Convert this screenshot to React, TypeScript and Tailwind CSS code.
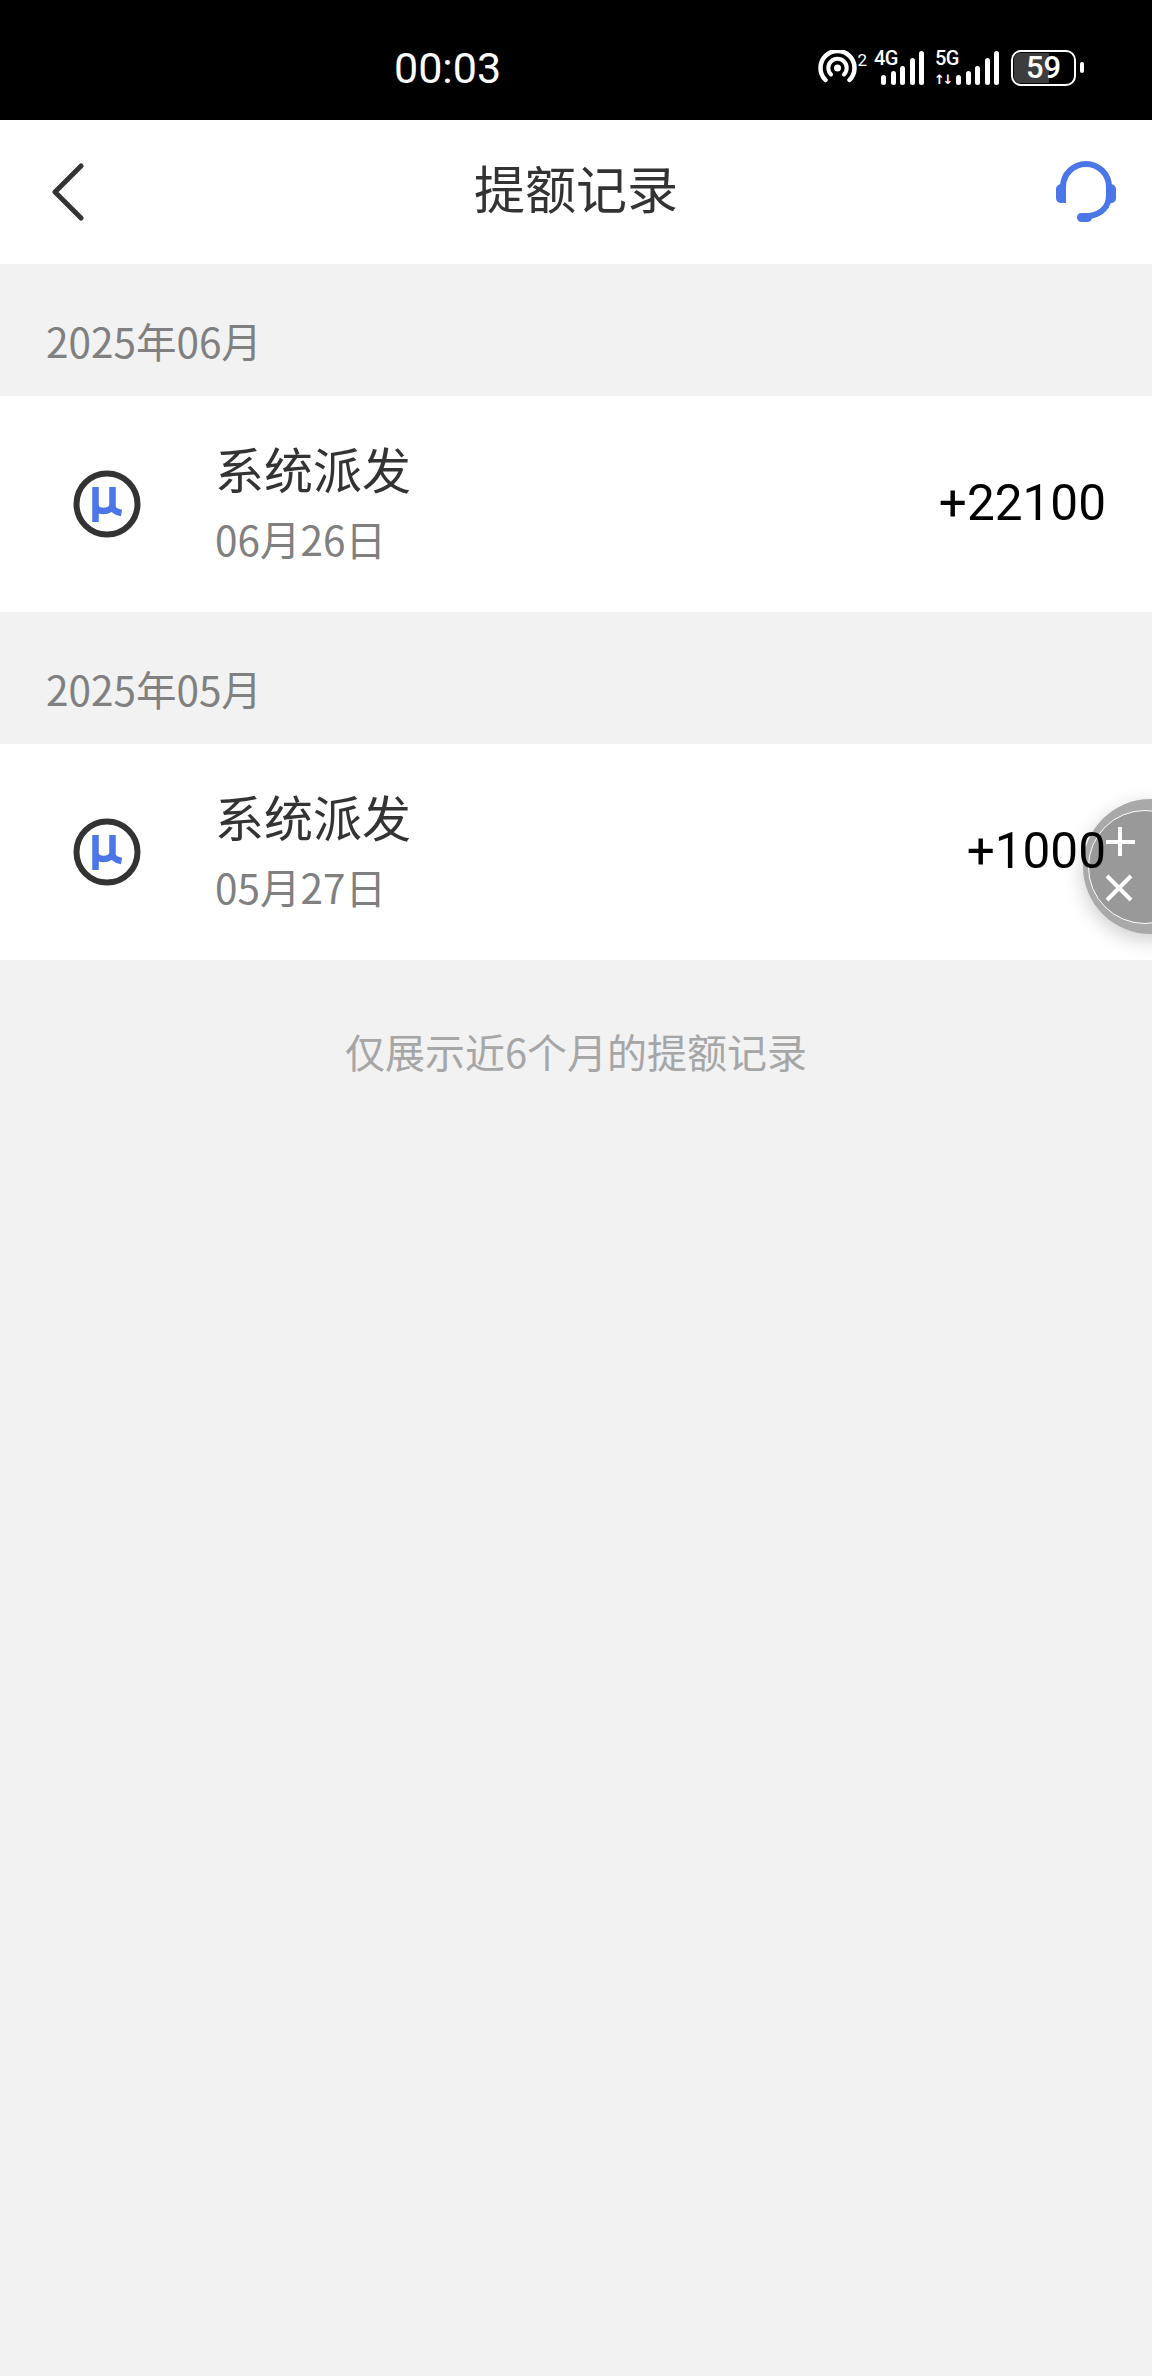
const cjk = "font-['Noto_Sans_CJK_SC','Noto_Sans',sans-serif]"

const records = [
  { month: '2025年06月', date: '06月26日', amount: '+22100' },
  { month: '2025年05月', date: '05月27日', amount: '+1000' },
]

function Hotspot() {
  return (
    <svg width="40" height="36" viewBox="0 0 40 36" fill="none" stroke="white" strokeLinecap="round">
      <circle cx="19.5" cy="18" r="3.5" fill="white" stroke="none" />
      <path d="M13 24.5a9.2 9.2 0 1 1 13 0" strokeWidth="4" />
      <path d="M7.5 30a17 17 0 1 1 24 0" strokeWidth="4.5" />
    </svg>
  )
}

function Signal({ label, arrows }: { label: string; arrows?: boolean }) {
  return (
    <div className="relative flex h-[35px] items-end">
      <span
        className={`absolute top-[-1px] font-['Roboto',sans-serif] text-[20px] leading-[18px] font-medium tracking-[-0.5px] text-white ${
          arrows ? 'left-[-21px]' : 'left-[-7px]'
        }`}
      >
        {label}
      </span>
      {arrows && (
        <span className="absolute bottom-[-1px] left-[-22px] font-['DejaVu_Sans',sans-serif] text-[13px] leading-[13px] font-bold tracking-[-2.5px] text-white">
          ↑↓
        </span>
      )}
      <div className="flex items-end gap-[4.5px]">
        <div className="h-[10px] w-[5px] rounded-full bg-white" />
        <div className="h-[14px] w-[5px] rounded-full bg-white" />
        <div className="h-[19px] w-[5px] rounded-full bg-white" />
        <div className="h-[27px] w-[5px] rounded-full bg-white" />
        <div className="h-[34px] w-[5px] rounded-full bg-white" />
      </div>
    </div>
  )
}

function Battery() {
  return (
    <div className="flex items-center gap-[4px]">
      <div className="relative h-[36px] w-[65px] rounded-[10px] border-[2.5px] border-white p-[1px]">
        <div className="h-full w-[35px] rounded-l-[6px] bg-[#3d3d3d]" />
        <span className="absolute inset-0 flex items-center justify-center font-['Roboto',sans-serif] text-[31px] leading-none font-medium text-white">
          59
        </span>
      </div>
      <div className="h-[11px] w-[4px] rounded-full bg-white" />
    </div>
  )
}

function StatusBar() {
  return (
    <div className="relative flex h-[120px] items-center justify-end bg-black pr-[68px]">
      <span className="absolute left-[394px] top-[44px] font-['Roboto',sans-serif] text-[43px] leading-[48px] text-white">
        00:03
      </span>
      <div className="mt-[15px] flex items-center">
        <Hotspot />
        <span className="mb-[16px] ml-[-1px] font-['Roboto',sans-serif] text-[17px] leading-[18px] text-white">2</span>
        <div className="ml-[14px]">
          <Signal label="4G" />
        </div>
        <div className="ml-[32px]">
          <Signal label="5G" arrows />
        </div>
        <div className="ml-[12px]">
          <Battery />
        </div>
      </div>
    </div>
  )
}

function Header() {
  return (
    <div className="grid h-[144px] grid-cols-[1fr_auto_1fr] items-center bg-white pl-[52px] pr-[35px]">
      <svg width="32" height="58" viewBox="0 0 32 58" fill="none" stroke="#333333" strokeWidth="5" strokeLinecap="round" strokeLinejoin="round">
        <path d="M29 3 3 29l26 26" />
      </svg>
      <h1 className={`${cjk} mb-[10px] ml-[-17px] text-[51px] leading-none font-normal text-[#333333]`}>提额记录</h1>
      <svg className="justify-self-end" width="62" height="62" viewBox="0 0 62 62" fill="none">
        <path d="M8 26a23 23 0 0 1 46 0v8c0 11-7 19-20 21" stroke="#4a76e8" strokeWidth="6" strokeLinecap="round" />
        <path d="M11 23v19H7c-4 0-6-2-6-5V28c0-3 3-5 6-5z" fill="#4a76e8" />
        <path d="M51 23v19h4c4 0 6-2 6-5V28c0-3-3-5-6-5z" fill="#4a76e8" />
        <rect x="22" y="52" width="15" height="9" rx="4.5" fill="#4a76e8" />
      </svg>
    </div>
  )
}

function RecordIcon() {
  return (
    <svg width="68" height="68" viewBox="0 0 68 68" fill="none">
      <circle cx="34" cy="34" r="30.5" stroke="#333333" strokeWidth="6" />
      <path d="M22.5 17v35M22.5 35c0 8 16 8 17 0M39.5 17v19c0 4 4 6 9 7" stroke="#4a76e8" strokeWidth="6.5" strokeLinejoin="round" />
    </svg>
  )
}

function Row({ date, amount }: { date: string; amount: string }) {
  return (
    <div className="flex h-[216px] items-center bg-white pl-[73px] pr-[46px]">
      <RecordIcon />
      <div className="mb-[6px] ml-[74px] flex flex-col">
        <span className={`${cjk} text-[49px] leading-[60px] text-[#333333]`}>系统派发</span>
        <span className={`${cjk} mt-[16px] text-[40.5px] leading-[50px] text-[#808080]`}>{date}</span>
      </div>
      <span className="relative z-10 ml-auto font-['Roboto',sans-serif] text-[49.5px] leading-none text-black">{amount}</span>
    </div>
  )
}

function FloatButton() {
  return (
    <div className="absolute left-[1083px] top-[799px] h-[135px] w-[135px] rounded-full bg-[#a9a9a9] p-[5px] shadow-[0_6px_20px_rgba(0,0,0,0.2)]">
      <div className="mt-[6px] h-[114px] w-[114px] rounded-full border border-white bg-[#999999] pl-[16px] pt-[16px]">
        <svg width="34" height="76" viewBox="0 0 34 76" fill="none" stroke="white" strokeWidth="4">
          <path d="M15 0v29M1 15h29M2 49l24 24M26 49 2 73" />
        </svg>
      </div>
    </div>
  )
}

export default function App() {
  return (
    <div className="relative h-[2376px] w-[1152px] overflow-hidden bg-[#f2f2f3]">
      <StatusBar />
      <Header />
      {records.map(r => (
        <div key={r.month}>
          <div className={`${cjk} flex h-[132px] items-center pl-[46px] pt-[22px] text-[40.5px] text-[#808080]`}>{r.month}</div>
          <Row date={r.date} amount={r.amount} />
        </div>
      ))}
      <p className={`${cjk} mt-[67px] text-center text-[40px] leading-[48px] text-[#a6a6a6]`}>仅展示近6个月的提额记录</p>
      <FloatButton />
    </div>
  )
}
